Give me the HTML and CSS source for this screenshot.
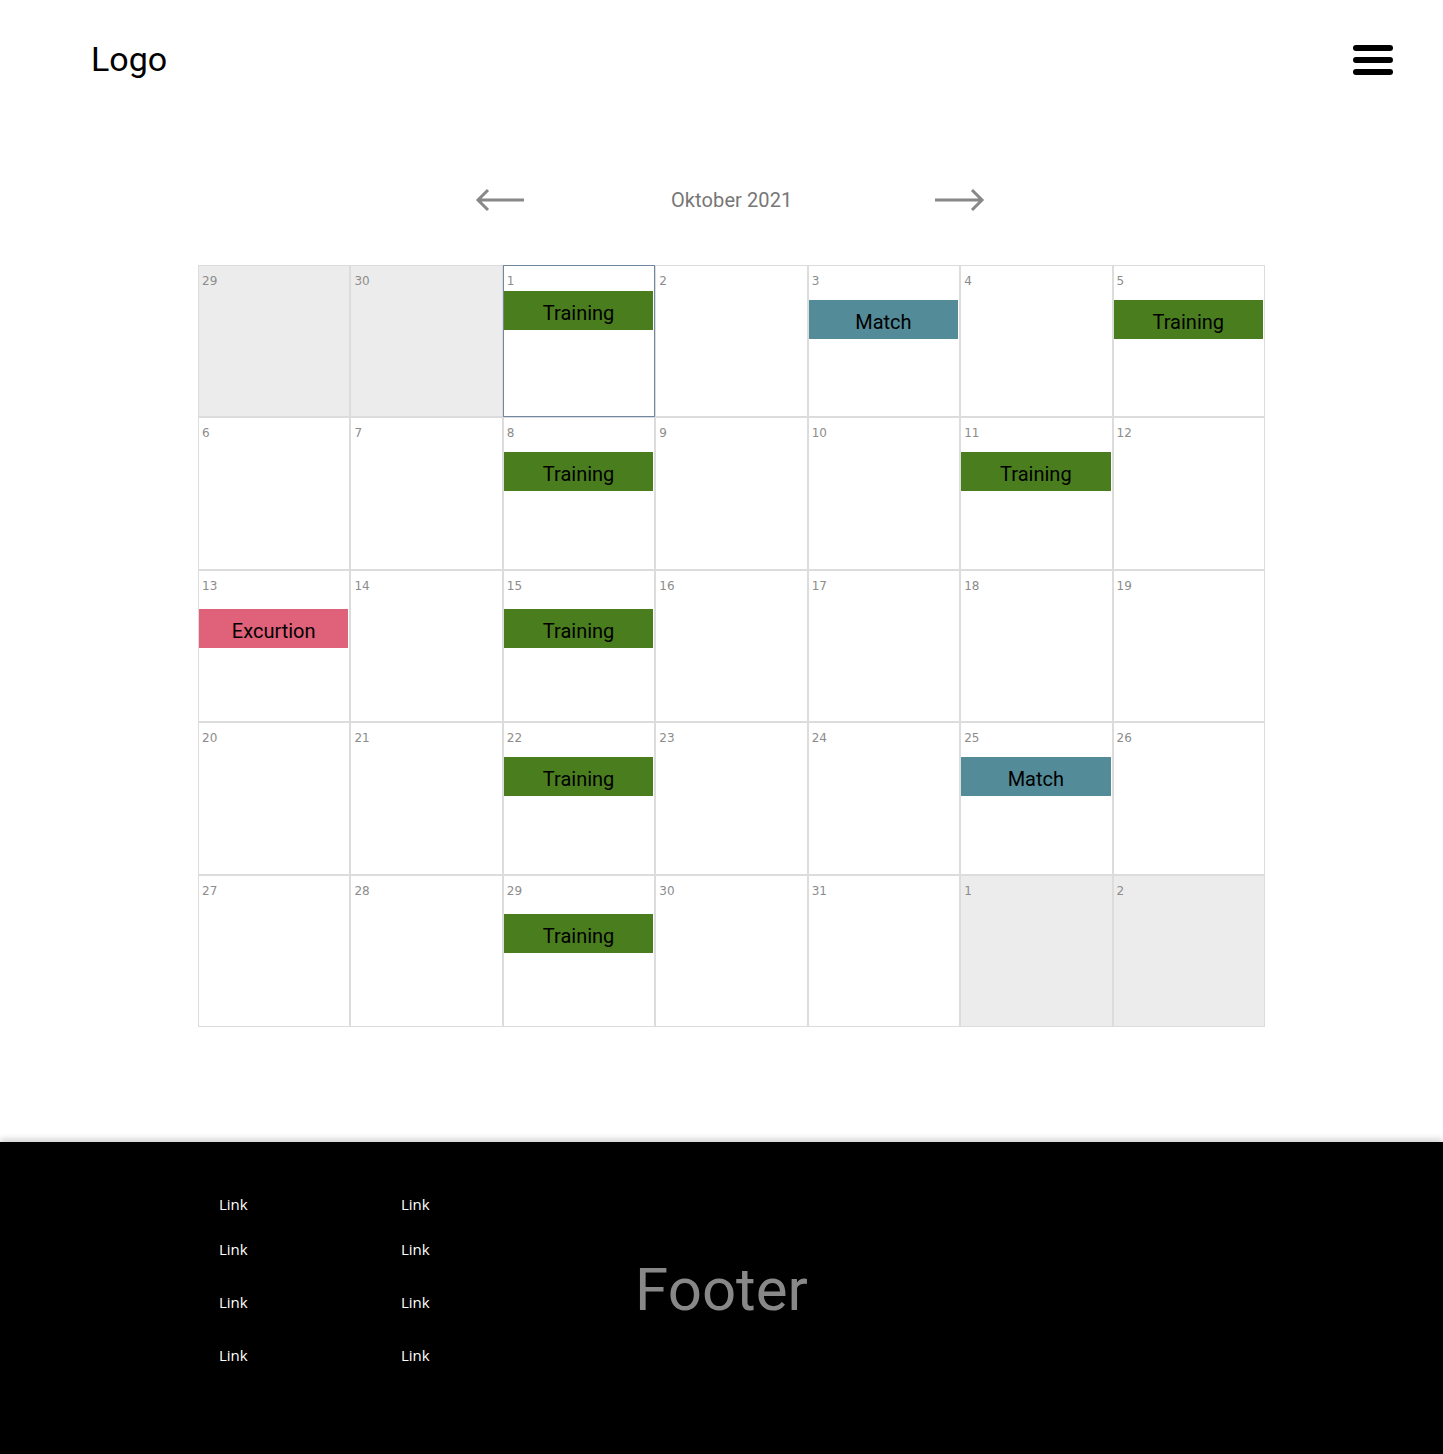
FILE: index.html
```html
<!DOCTYPE html>
<html lang="de">
<head>
  <meta charset="UTF-8" />
  <title>Kalender</title>
  <meta name="viewport" content="width=device-width, initial-scale=1.0" />
  <link rel="stylesheet" href="styles.css">
</head>
<body>
  <header class="top">
    <div class="logo">Logo</div>
    <button class="menu" aria-label="Menu">
      <svg width="40" height="30" viewBox="0 0 40 30">
        <path d="M3 3H37M3 15H37M3 27H37" stroke="#000" stroke-width="6" stroke-linecap="round" />
      </svg>
    </button>
  </header>

  <main class="calendar">
    <div class="month-nav">
      <svg class="arrow" width="50" height="24" viewBox="0 0 50 24">
        <path d="M49 12H3M13 2L3 12L13 22" fill="none" stroke="#888" stroke-width="3" />
      </svg>
      <span class="month-title">Oktober 2021</span>
      <svg class="arrow" width="50" height="24" viewBox="0 0 50 24">
        <path d="M0 12H47M37 2L47 12L37 22" fill="none" stroke="#888" stroke-width="3" />
      </svg>
    </div>

    <div class="grid">
      <div class="day other"><span class="num">29</span></div>
      <div class="day other"><span class="num">30</span></div>
      <div class="day selected"><span class="num">1</span><div class="event training up">Training</div></div>
      <div class="day"><span class="num">2</span></div>
      <div class="day"><span class="num">3</span><div class="event match">Match</div></div>
      <div class="day"><span class="num">4</span></div>
      <div class="day"><span class="num">5</span><div class="event training">Training</div></div>

      <div class="day"><span class="num">6</span></div>
      <div class="day"><span class="num">7</span></div>
      <div class="day"><span class="num">8</span><div class="event training">Training</div></div>
      <div class="day"><span class="num">9</span></div>
      <div class="day"><span class="num">10</span></div>
      <div class="day"><span class="num">11</span><div class="event training">Training</div></div>
      <div class="day"><span class="num">12</span></div>

      <div class="day"><span class="num">13</span><div class="event excursion down">Excurtion</div></div>
      <div class="day"><span class="num">14</span></div>
      <div class="day"><span class="num">15</span><div class="event training down">Training</div></div>
      <div class="day"><span class="num">16</span></div>
      <div class="day"><span class="num">17</span></div>
      <div class="day"><span class="num">18</span></div>
      <div class="day"><span class="num">19</span></div>

      <div class="day"><span class="num">20</span></div>
      <div class="day"><span class="num">21</span></div>
      <div class="day"><span class="num">22</span><div class="event training">Training</div></div>
      <div class="day"><span class="num">23</span></div>
      <div class="day"><span class="num">24</span></div>
      <div class="day"><span class="num">25</span><div class="event match">Match</div></div>
      <div class="day"><span class="num">26</span></div>

      <div class="day"><span class="num">27</span></div>
      <div class="day"><span class="num">28</span></div>
      <div class="day"><span class="num">29</span><div class="event training down">Training</div></div>
      <div class="day"><span class="num">30</span></div>
      <div class="day"><span class="num">31</span></div>
      <div class="day other"><span class="num">1</span></div>
      <div class="day other"><span class="num">2</span></div>
    </div>
  </main>

  <footer class="bottom">
    <div class="links">
      <a href="#">Link</a>
      <a href="#">Link</a>
      <a href="#">Link</a>
      <a href="#">Link</a>
      <a href="#">Link</a>
      <a href="#">Link</a>
      <a href="#">Link</a>
      <a href="#">Link</a>
    </div>
    <div class="footer-title">Footer</div>
  </footer>
</body>
</html>
```

FILE: styles.css
```css
* {
  box-sizing: border-box;
}

body {
  margin: 0;
  padding: 0;
  background-color: #fff;
  font-family: Roboto, "Liberation Sans", sans-serif;
  color: #000;
}

.top {
  height: 120px;
  padding: 0 50px 0 91px;
  display: flex;
  justify-content: space-between;
  align-items: center;
}

.logo {
  font-size: 34px;
  line-height: 40px;
  margin-top: -2px;
}

.menu {
  background: none;
  border: none;
  padding: 0;
  display: flex;
  cursor: pointer;
}

.calendar {
  width: 1067px;
  margin-left: 198px;
  padding-top: 68px;
  padding-bottom: 115px;
}

.month-nav {
  display: flex;
  align-items: center;
  height: 24px;
  padding-left: 277px;
  margin-bottom: 53px;
}

.month-title {
  margin: 0 143px 0 146px;
  font-size: 20px;
  color: #777;
  letter-spacing: 0.1px;
}

.arrow {
  display: block;
}

.grid {
  display: grid;
  grid-template-columns: repeat(7, 1fr);
  grid-auto-rows: 152.4px;
}

.day {
  border: 1px solid #dcdcdc;
  padding: 9px 1px 0 0;
}

.day.other {
  background-color: #ececec;
}

.day.selected {
  border-color: #6f87a0;
}

.num {
  display: block;
  padding-left: 3px;
  font-family: "DejaVu Sans", Verdana, sans-serif;
  font-size: 12px;
  line-height: 13px;
  color: #8c8c8c;
}

.event {
  height: 39px;
  margin-top: 12px;
  padding-top: 5px;
  line-height: 35px;
  text-align: center;
  font-size: 20px;
  color: #000;
}

.event.up {
  margin-top: 3px;
}

.event.down {
  margin-top: 16px;
}

.training {
  background-color: #4a7d1e;
}

.match {
  background-color: #548b99;
}

.excursion {
  background-color: #e0617a;
}

.bottom {
  height: 312px;
  background-color: #000;
  box-shadow: 0 -3px 6px rgba(0, 0, 0, 0.18);
  display: grid;
  grid-template-columns: 1fr auto 1fr;
  align-items: start;
}

.links {
  margin-left: 219px;
  padding-top: 52px;
  display: grid;
  grid-template-columns: 182px 60px;
  grid-template-rows: 45px 53px 53px 20px;
  font-family: "Open Sans", sans-serif;
  font-size: 15px;
  line-height: 20px;
}

.links a {
  color: #fff;
  text-decoration: none;
}

.footer-title {
  grid-column: 2;
  margin-top: 113px;
  font-size: 60px;
  line-height: 70px;
  color: #888;
}
```
